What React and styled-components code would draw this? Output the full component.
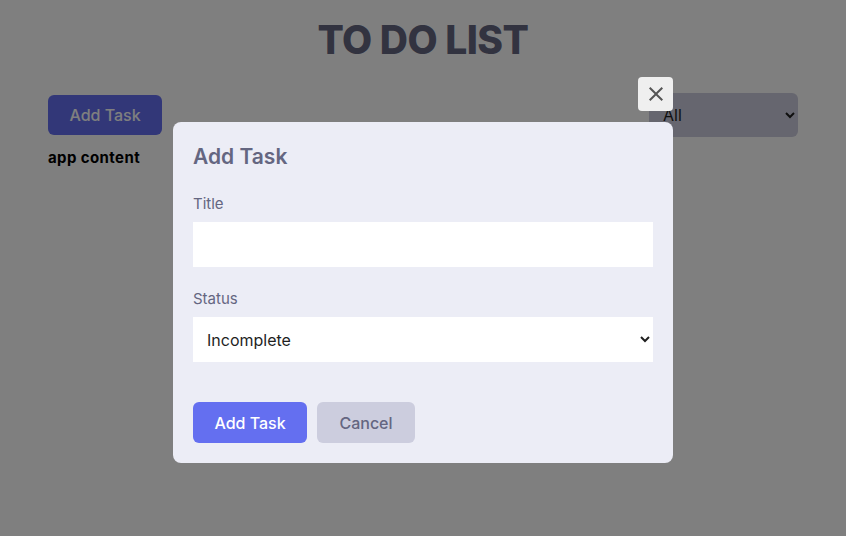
import React from 'react';
import styled, { createGlobalStyle } from 'styled-components';
import { MdOutlineClose } from 'react-icons/md';

const GlobalStyle = createGlobalStyle`
  * {
    box-sizing: border-box;
  }
  html, body {
    margin: 0;
    padding: 0;
    background: #fff;
    font-family: 'Inter', 'Open Sans', sans-serif;
  }
`;

const Page = styled.div`
  width: 750px;
  margin: 0 auto;
`;

const Title = styled.h1`
  margin: 0;
  padding-top: 10px;
  text-align: center;
  font-size: 39px;
  line-height: 60px;
  font-weight: 800;
  letter-spacing: -0.5px;
  text-transform: uppercase;
  color: #646681;
`;

const Header = styled.div`
  display: flex;
  align-items: center;
  justify-content: space-between;
  margin-top: 23px;
`;

const Button = styled.button`
  display: inline-flex;
  align-items: center;
  justify-content: center;
  height: ${(p) => p.$h || 41}px;
  width: ${(p) => p.$w}px;
  border: none;
  border-radius: 6px;
  font-family: inherit;
  font-size: 16px;
  font-weight: 500;
  cursor: pointer;
  background: ${(p) => (p.$variant === 'secondary' ? '#cccdde' : '#646ff0')};
  color: ${(p) => (p.$variant === 'secondary' ? '#646681' : '#fff')};
`;

const FilterSelect = styled.select`
  width: 149px;
  height: 44px;
  border: none;
  border-radius: 6px;
  background: #cccdde;
  color: #1f1f1f;
  font-family: inherit;
  font-size: 16px;
  padding: 0 10px;
`;

const Content = styled.div`
  margin-top: 11px;
  font-size: 15px;
  letter-spacing: 0.4px;
  font-weight: 700;
  color: #000;
`;

const Overlay = styled.div`
  position: fixed;
  inset: 0;
  background: rgba(0, 0, 0, 0.5);
  display: flex;
  justify-content: center;
  align-items: flex-start;
  padding-top: 122px;
`;

const Modal = styled.div`
  position: relative;
  width: 500px;
  background: #ecedf6;
  border-radius: 8px;
  padding: 20px;
`;

const CloseButton = styled.div`
  position: absolute;
  top: -45px;
  right: 0;
  width: 35px;
  height: 34px;
  border-radius: 4px;
  background: #efefef;
  color: #555;
  display: flex;
  align-items: center;
  justify-content: center;
  font-size: 24px;
`;

const FormTitle = styled.h2`
  margin: 0 0 20px;
  font-size: 21px;
  line-height: 30px;
  font-weight: 600;
  color: #646681;
`;

const Label = styled.label`
  display: block;
  font-size: 15px;
  line-height: 24px;
  color: #646681;
  margin-bottom: 6px;
`;

const Field = styled.div`
  margin-bottom: ${(p) => p.$mb || 20}px;
`;

const Input = styled.input`
  display: block;
  width: 100%;
  height: 45px;
  border: none;
  background: #fff;
  font-family: inherit;
  font-size: 16px;
  padding: 0 14px;
`;

const StatusSelect = styled.select`
  display: block;
  width: 100%;
  height: 45px;
  border: none;
  border-radius: 0;
  background: #fff;
  color: #1f1f1f;
  font-family: inherit;
  font-size: 16px;
  padding: 0 10px;
`;

const Actions = styled.div`
  display: flex;
  gap: 10px;
`;

export default function App() {
  return (
    <>
      <GlobalStyle />
      <Page>
        <Title>To Do List</Title>
        <Header>
          <Button $w={114} $h={40}>Add Task</Button>
          <FilterSelect defaultValue="all">
            <option value="all">All</option>
            <option value="incomplete">Incomplete</option>
            <option value="complete">Completed</option>
          </FilterSelect>
        </Header>
        <Content>app content</Content>
      </Page>
      <Overlay>
        <Modal>
          <CloseButton>
            <MdOutlineClose />
          </CloseButton>
          <FormTitle>Add Task</FormTitle>
          <Field>
            <Label htmlFor="title">Title</Label>
            <Input id="title" type="text" />
          </Field>
          <Field $mb={40}>
            <Label htmlFor="status">Status</Label>
            <StatusSelect id="status" defaultValue="incomplete">
              <option value="incomplete">Incomplete</option>
              <option value="complete">Completed</option>
            </StatusSelect>
          </Field>
          <Actions>
            <Button $w={114}>Add Task</Button>
            <Button $w={98} $variant="secondary">Cancel</Button>
          </Actions>
        </Modal>
      </Overlay>
    </>
  );
}
